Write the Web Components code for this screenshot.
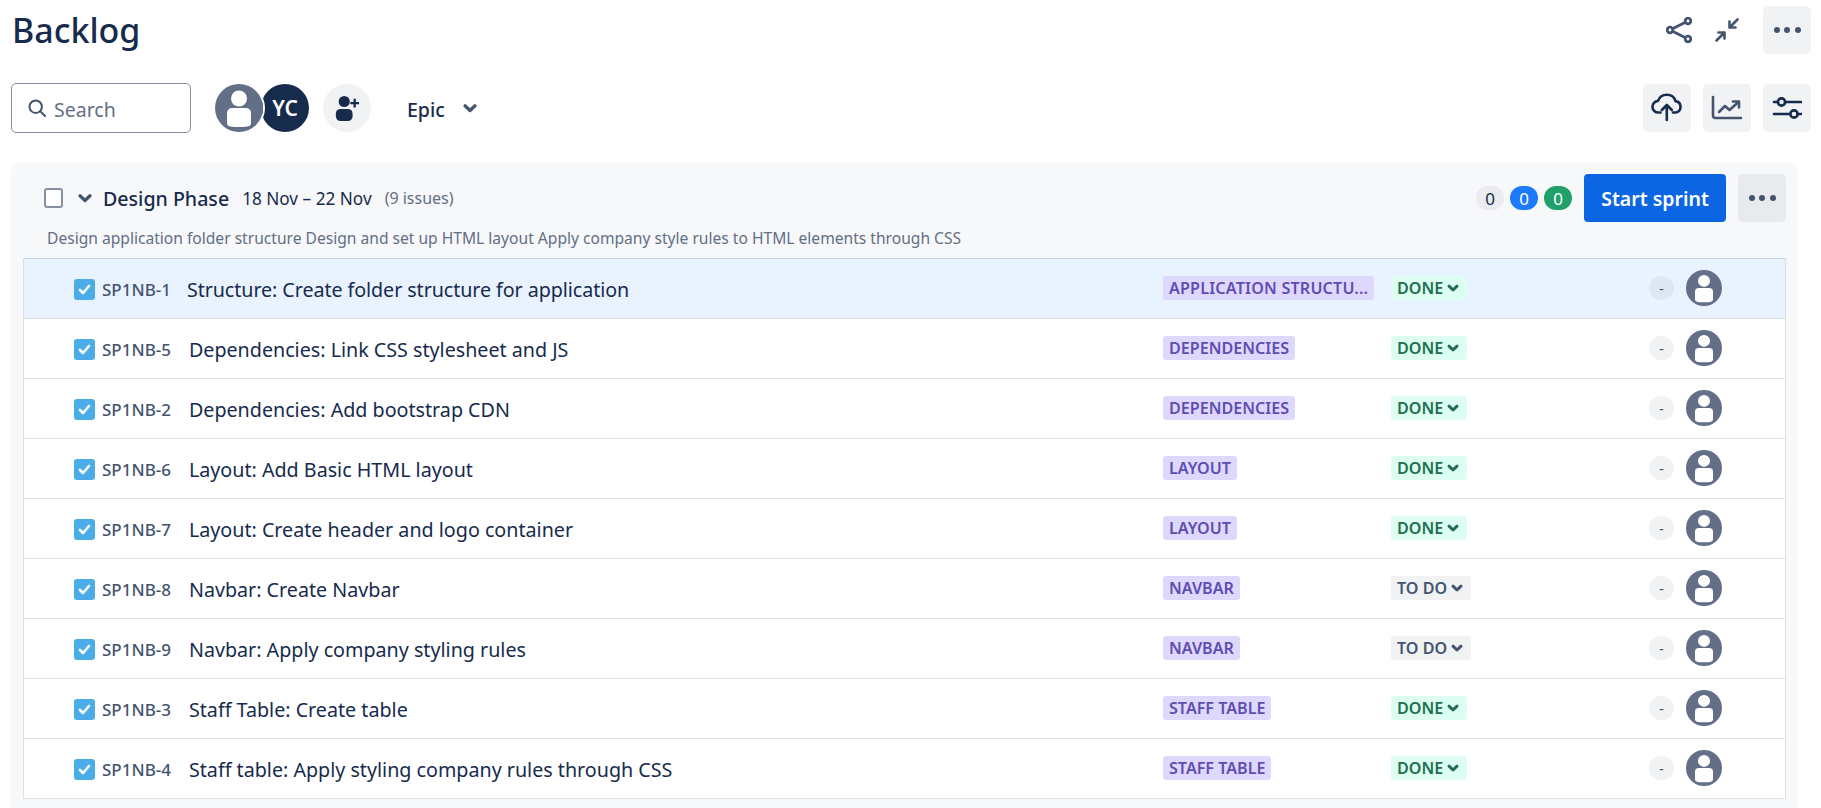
<!DOCTYPE html>
<html lang="en">
<head>
<meta charset="utf-8">
<title>Backlog</title>
<style>
  html, body { margin: 0; height: 100%; background: #fff; overflow: hidden; }
  body { font-family: "Noto Sans", "Open Sans", sans-serif; color: #172b4d; }
</style>
</head>
<body>
<backlog-page>
  <sprint-panel name="Design Phase" dates="18 Nov – 22 Nov" count="(9 issues)"
    goal="Design application folder structure Design and set up HTML layout Apply company style rules to HTML elements through CSS">
    <issue-row selected issue="SP1NB-1" label="APPLICATION STRUCTU..." status="DONE">Structure: Create folder structure for application</issue-row>
    <issue-row issue="SP1NB-5" label="DEPENDENCIES" status="DONE">Dependencies: Link CSS stylesheet and JS</issue-row>
    <issue-row issue="SP1NB-2" label="DEPENDENCIES" status="DONE">Dependencies: Add bootstrap CDN</issue-row>
    <issue-row issue="SP1NB-6" label="LAYOUT" status="DONE">Layout: Add Basic HTML layout</issue-row>
    <issue-row issue="SP1NB-7" label="LAYOUT" status="DONE">Layout: Create header and logo container</issue-row>
    <issue-row issue="SP1NB-8" label="NAVBAR" status="TO DO">Navbar: Create Navbar</issue-row>
    <issue-row issue="SP1NB-9" label="NAVBAR" status="TO DO">Navbar: Apply company styling rules</issue-row>
    <issue-row issue="SP1NB-3" label="STAFF TABLE" status="DONE">Staff Table: Create table</issue-row>
    <issue-row issue="SP1NB-4" label="STAFF TABLE" status="DONE">Staff table: Apply styling company rules through CSS</issue-row>
  </sprint-panel>
</backlog-page>

<script>
const CHEVRON = (size, width) => `<svg width="${ size }" height="${ size }" viewBox="0 0 16 16" fill="none" stroke="currentColor" stroke-width="${ width }" stroke-linecap="round" stroke-linejoin="round"><path d="M4 6.200 8 10l4-3.800"/></svg>`;

const ICONS = {
  share: `<svg width="26" height="26" viewBox="0 0 26 26" fill="none" stroke="#44546f" stroke-width="2.800"><circle cx="22" cy="4" r="2.800"/><circle cx="4" cy="13" r="2.800"/><circle cx="22" cy="22" r="2.800"/><path d="M6.500 11.700 19.500 5.300M6.500 14.300l13 6.400"/></svg>`,
  shrink: `<svg width="26" height="26" viewBox="0 0 26 26" fill="none" stroke="#44546f" stroke-width="2.600" stroke-linecap="round" stroke-linejoin="round"><path d="M23.500 2.500 15.500 10.500M15.500 4.500v6h6"/><path d="M2.500 23.500l8-8M4.500 15.500h6v6"/></svg>`,
  more: `<svg width="28" height="8" viewBox="0 0 28 8" fill="#44546f"><circle cx="4" cy="4" r="3"/><circle cx="14" cy="4" r="3"/><circle cx="25" cy="4" r="3"/></svg>`,
  cloud: `<svg width="32" height="30" viewBox="0 0 32 30" fill="none" stroke="#172b4d" stroke-width="2.600" stroke-linecap="round" stroke-linejoin="round"><path d="M9.500 19.500H7.500a5.800 5.800 0 0 1-.5-11.600C8.500 3.800 12 1.800 15.800 1.800c4.200 0 7.600 2.700 8.700 6.300a5.800 5.800 0 0 1 .5 11.400h-3"/><path d="M15.800 27V12.500M10.800 17l5-5 5 5"/></svg>`,
  chart: `<svg width="32" height="26" viewBox="0 0 32 26" fill="none" stroke="#44546f" stroke-width="2.600" stroke-linecap="round" stroke-linejoin="round"><path d="M2 2v18.500a2.500 2.500 0 0 0 2.500 2.500H30"/><path d="M8 17l6-6 4.500 4L27.500 7"/><path d="M22 6.500h6v6"/></svg>`,
  sliders: `<svg width="30" height="24" viewBox="0 0 30 24" fill="none" stroke="#172b4d" stroke-width="2.600" stroke-linecap="round"><path d="M2 6h4M13.500 6H29M2 18h16M25.500 18H29"/><circle cx="9.500" cy="6" r="3.600"/><circle cx="22" cy="18" r="3.600"/></svg>`,
  search: `<svg width="20" height="20" viewBox="0 0 20 20" fill="none" stroke="#44546f" stroke-width="2" stroke-linecap="round"><circle cx="8.700" cy="8.700" r="6.200"/><path d="m13.300 13.300 4.700 4.700"/></svg>`,
  addUser: `<svg width="28" height="28" viewBox="0 0 28 28" fill="#172b4d"><circle cx="11" cy="7" r="6"/><rect x="2" y="15" width="18" height="13" rx="5"/><path d="M21 4h2.500v3.500H27V10h-3.500v3.500H21V10h-3.500V7.500H21z"/></svg>`
};

class IconButton extends HTMLElement {
  constructor() {
    super();
    this.attachShadow({mode: 'open'}).innerHTML = `
      <style>
        :host { display: flex; align-items: center; justify-content: center; width: 48px; height: 48px; border-radius: 5px; background: #f1f2f4; }
        :host([plain]) { background: transparent; }
        :host([darker]) { background: #e9eaee; }
        svg { display: block; }
      </style>
      ${ ICONS[this.getAttribute('icon')] }`;
  }
}
customElements.define('icon-button', IconButton);

class UserAvatar extends HTMLElement {
  constructor() {
    super();
    const initials = this.getAttribute('initials');
    this.attachShadow({mode: 'open'}).innerHTML = `
      <style>
        :host { display: block; flex: none; width: var(--size, 48px); height: var(--size, 48px); border-radius: 50%; }
        .initials { display: flex; align-items: center; justify-content: center; width: 100%; height: 100%; border-radius: 50%; background: #172b4d; color: #fff; font-size: 21px; font-weight: 600; }
        svg { display: block; width: 100%; height: 100%; }
      </style>
      ${ initials ? `<div class="initials">${ initials }</div>` : `
      <svg viewBox="0 0 48 48">
        <circle cx="24" cy="24" r="24" fill="#626f86"/>
        <circle cx="24" cy="14.500" r="8" fill="#fff"/>
        <path d="M12 29a5 5 0 0 1 5-5h14a5 5 0 0 1 5 5v10c0 2-1.500 3.200-3.500 3.500-5.500.8-11.500.8-17 0-2-.3-3.500-1.500-3.500-3.500z" fill="#fff"/>
      </svg>` }`;
  }
}
customElements.define('user-avatar', UserAvatar);

class BacklogPage extends HTMLElement {
  constructor() {
    super();
    this.attachShadow({mode: 'open'}).innerHTML = `
      <style>
        :host { display: block; padding: 6px 10px 0 11px; }
        header { display: flex; align-items: center; justify-content: space-between; height: 48px; }
        h1 { margin: 0 0 0 1px; font-size: 34px; font-weight: 500; line-height: 48px; color: #172b4d; }
        .actions { display: flex; gap: 12px; }
        header .actions { gap: 0; }
        header icon-button[icon="shrink"] { margin-right: 12px; }
        .toolbar { display: flex; align-items: center; height: 48px; margin-top: 30px; }
        .search { box-sizing: border-box; display: flex; align-items: center; gap: 7px; width: 180px; height: 50px; padding-left: 15px; border: 1px solid #8590a2; border-radius: 5px; font-size: 19.500px; color: #626f86; }
        .search svg { flex: none; }
        .search span { padding-top: 2px; }
        .avatars { display: flex; margin-left: 24px; }
        .avatars user-avatar + user-avatar { margin-left: -2px; }
        .avatars user-avatar:first-child { position: relative; z-index: 1; box-shadow: 0 0 0 2px #fff; }
        .add { display: flex; align-items: center; justify-content: center; width: 48px; height: 48px; margin-left: 14px; border-radius: 50%; background: #f1f2f4; }
        .add svg { width: 26px; height: 26px; }
        .epic { display: flex; align-items: center; gap: 15px; margin-left: 36px; font-size: 19.500px; font-weight: 500; color: #172b4d; }
        .epic b { font-weight: inherit; padding-top: 2px; }
        .epic span { display: flex; color: #44546f; }
        .spacer { flex: 1; }
        ::slotted(sprint-panel) { margin-top: 30px; }
      </style>
      <header>
        <h1>Backlog</h1>
        <div class="actions">
          <icon-button plain icon="share"></icon-button>
          <icon-button plain icon="shrink"></icon-button>
          <icon-button icon="more"></icon-button>
        </div>
      </header>
      <div class="toolbar">
        <div class="search">${ ICONS.search }<span>Search</span></div>
        <div class="avatars">
          <user-avatar></user-avatar>
          <user-avatar initials="YC"></user-avatar>
        </div>
        <div class="add">${ ICONS.addUser }</div>
        <div class="epic"><b>Epic</b> <span>${ CHEVRON(20, 2.6) }</span></div>
        <div class="spacer"></div>
        <div class="actions">
          <icon-button icon="cloud"></icon-button>
          <icon-button icon="chart"></icon-button>
          <icon-button icon="sliders"></icon-button>
        </div>
      </div>
      <slot></slot>`;
  }
}
customElements.define('backlog-page', BacklogPage);

class SprintPanel extends HTMLElement {
  constructor() {
    super();
    this.attachShadow({mode: 'open'}).innerHTML = `
      <style>
        :host { display: block; margin-right: 13px; padding: 12px; background: #f7f8f9; border-radius: 12px 12px 0 0; }
        .head { display: flex; align-items: center; height: 48px; }
        .box { box-sizing: border-box; width: 19px; height: 20px; margin: 0 0 0 21px; border: 2px solid #8590a2; border-radius: 3px; background: #fff; }
        .toggle { display: flex; margin-left: 12px; color: #44546f; }
        .name { margin-left: 8px; font-size: 19.600px; font-weight: 500; color: #172b4d; }
        .dates { margin-left: 13px; font-size: 17.200px; color: #172b4d; }
        .count { margin-left: 13px; font-size: 16px; color: #626f86; }
        .spacer { flex: 1; }
        .pill { display: flex; align-items: center; justify-content: center; width: 28px; height: 24px; margin-right: 6px; border-radius: 12px; font-size: 17px; background: #ebecf0; color: #172b4d; }
        .pill.blue { background: #1d7afc; color: #fff; }
        .pill.green { background: #22a06b; color: #fff; margin-right: 12px; }
        .start { display: flex; align-items: center; justify-content: center; width: 142px; height: 48px; margin-right: 12px; border-radius: 4px; background: #0c66e4; color: #fff; font-size: 19.500px; font-weight: 600; }
        .goal { height: 28px; margin: 2px 0 6px 24px; font-size: 15.600px; line-height: 28px; color: #626f86; white-space: nowrap; }
        .rows { border: 1px solid #dcdfe4; border-top: 0; background: #fff; }
      </style>
      <div class="head">
        <div class="box"></div>
        <div class="toggle">${ CHEVRON(20, 2.6) }</div>
        <div class="name">${ this.getAttribute('name') }</div>
        <div class="dates">${ this.getAttribute('dates') }</div>
        <div class="count">${ this.getAttribute('count') }</div>
        <div class="spacer"></div>
        <div class="pill">0</div>
        <div class="pill blue">0</div>
        <div class="pill green">0</div>
        <div class="start">Start sprint</div>
        <icon-button darker icon="more"></icon-button>
      </div>
      <div class="goal">${ this.getAttribute('goal') }</div>
      <div class="rows"><slot></slot></div>`;
  }
}
customElements.define('sprint-panel', SprintPanel);

class IssueRow extends HTMLElement {
  constructor() {
    super();
    const status = this.getAttribute('status');
    const label = this.getAttribute('label');
    this.attachShadow({mode: 'open'}).innerHTML = `
      <style>
        :host { box-sizing: border-box; display: grid; grid-template-columns: 1139px 228px 258px 37px 36px; align-items: center; height: 60px; padding-bottom: 1px; border-top: 1px solid #dcdfe4; --dash: #f1f2f4; }
        :host([selected]) { background: #e9f2ff; border-top-color: #c4d2e8; --dash: #dfe7f5; }
        .summary { display: flex; align-items: center; padding-left: 50px; min-width: 0; }
        .check { display: flex; align-items: center; justify-content: center; flex: none; width: 21px; height: 21px; margin-top: 3px; border-radius: 3px; background: #4bade8; }
        .key { margin-left: 7px; padding-top: 3px; font-size: 17px; font-weight: 500; color: #44546f; }
        .title { margin-left: 18px; padding-top: 2px; font-size: 19.700px; color: #172b4d; white-space: nowrap; }
        :host([selected]) .title { margin-left: 16px; letter-spacing: -.07px; }
        .tag { justify-self: start; display: inline-flex; align-items: center; height: 24px; padding: 0 6px; border-radius: 3px; font-size: 16.100px; font-weight: 600; white-space: nowrap; }
        .label { background: #dfd8fd; color: #5e4db2; }
        .label.cut { letter-spacing: .2px; }
        .status { gap: 2px; background: #dcfff1; color: #216e4e; }
        .status.todo { background: #f1f2f4; color: #44546f; }
        .dash { display: flex; align-items: center; justify-content: center; width: 25px; height: 24px; border-radius: 12px; background: var(--dash); font-size: 14px; color: #44546f; }
        user-avatar { --size: 36px; }
      </style>
      <div class="summary">
        <div class="check"><svg width="15" height="15" viewBox="0 0 15 15" fill="none" stroke="#fff" stroke-width="2.600" stroke-linecap="round" stroke-linejoin="round"><path d="m3 8 3 3 6-7"/></svg></div>
        <div class="key">${ this.getAttribute('issue') }</div>
        <div class="title"><slot></slot></div>
      </div>
      <div><span class="tag label ${ label.endsWith('...') ? 'cut' : '' }">${ label }</span></div>
      <div><span class="tag status ${ status === 'DONE' ? '' : 'todo' }">${ status }${ CHEVRON(16, 3) }</span></div>
      <div class="dash">-</div>
      <user-avatar></user-avatar>`;
  }
}
customElements.define('issue-row', IssueRow);
</script>
</body>
</html>
